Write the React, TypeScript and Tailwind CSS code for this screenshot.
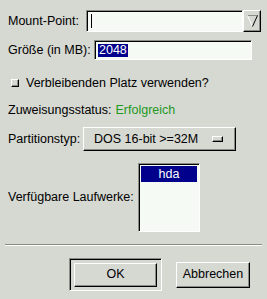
import React from 'react';

const raised =
  'border border-t-white border-l-white border-b-black border-r-black shadow-[inset_-1px_-1px_0_#8a8d86]';
const sunken =
  'border border-t-[#8a8d86] border-l-[#8a8d86] border-b-white border-r-white shadow-[inset_1px_1px_0_#000]';

export default function App() {
  return (
    <div
      className="w-[267px] h-[299px] bg-[#d6d8d2] text-black text-[12.5px] leading-none overflow-hidden whitespace-nowrap"
      style={{ fontFamily: '"Liberation Sans", Arial, sans-serif' }}>
      <div className="flex items-center h-[22px] mt-[10px] pl-[8px]">
        <span className="w-[78px] shrink-0">Mount-Point:</span>
        <div className={`w-[157px] h-[22px] shrink-0 bg-[#f6faf4] flex items-center pl-[4px] ${sunken}`}>
          <div className="w-px h-[14px] bg-black" />
        </div>
        <div className={`w-[18px] h-[22px] shrink-0 bg-[#d6d8d2] flex items-center justify-center ${raised}`}>
          <svg width="11" height="12" viewBox="0 0 11 12">
            <path d="M0.5 0.5 L10.5 0.5" stroke="#8a8d86" strokeWidth="1" />
            <path d="M0.5 0.5 L5.5 11.5" stroke="#ffffff" strokeWidth="1" />
            <path d="M10.5 0.5 L5.5 11.5" stroke="#000" strokeWidth="1" />
          </svg>
        </div>
      </div>

      <div className="flex items-center h-[20px] mt-[8px] pl-[8px]">
        <span className="w-[86px] shrink-0">Größe (in MB):</span>
        <div className={`w-[158px] h-[20px] shrink-0 bg-[#f6faf4] flex items-center pl-[3px] ${sunken}`}>
          <span className="bg-[#00008c] text-white px-[1px] h-[13px] flex items-center">2048</span>
        </div>
      </div>

      <div className="flex items-center h-[10px] mt-[18px] pl-[11px]">
        <div className={`w-[8px] h-[8px] shrink-0 bg-[#d6d8d2] ${raised}`} />
        <span className="ml-[7px]">Verbleibenden Platz verwenden?</span>
      </div>

      <div className="flex items-center h-[14px] mt-[15px] pl-[8px]">
        <span>Zuweisungsstatus:</span>
        <span className="ml-[4px] text-[#1f9a1f]">Erfolgreich</span>
      </div>

      <div className="flex items-center h-[24px] mt-[10px] pl-[8px]">
        <span className="w-[75px] shrink-0">Partitionstyp:</span>
        <div className={`w-[153px] h-[24px] shrink-0 bg-[#d6d8d2] flex items-center justify-between pl-[10px] pr-[12px] ${raised}`}>
          <span>DOS 16-bit &gt;=32M</span>
          <div className={`w-[11px] h-[6px] ${raised}`} />
        </div>
      </div>

      <div className="flex items-center h-[69px] mt-[12px] pl-[8px]">
        <span className="w-[130px] shrink-0">Verfügbare Laufwerke:</span>
        <div className={`w-[62px] h-[69px] shrink-0 bg-[#f6faf4] p-[2px] ${sunken}`}>
          <div className="h-[16px] bg-[#00008c] text-white flex items-center justify-center">hda</div>
        </div>
      </div>

      <div className="mt-[12px] mx-[5px] h-[2px] border-t border-t-[#8a8d86] border-b border-b-white" />

      <div className="flex items-center justify-end mt-[12px] pr-[17px]">
        <div className="w-[93px] h-[33px] shrink-0 border border-t-[#8a8d86] border-l-[#8a8d86] border-b-white border-r-white shadow-[inset_1px_1px_0_#000] flex items-center justify-center">
          <div className={`w-[83px] h-[24px] bg-[#d6d8d2] flex items-center justify-center ${raised}`}>OK</div>
        </div>
        <div className={`ml-[14px] w-[74px] h-[26px] shrink-0 bg-[#d6d8d2] flex items-center justify-center ${raised}`}>Abbrechen</div>
      </div>
    </div>
  );
}
